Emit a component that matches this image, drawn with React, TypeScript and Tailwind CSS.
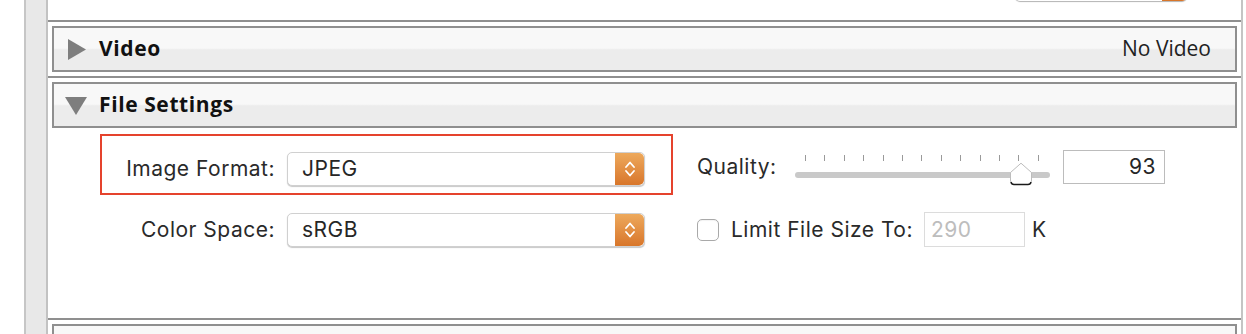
import React from "react";

const font = { fontFamily: "Inter, 'Noto Sans', sans-serif" };
const hfont = { fontFamily: "'Open Sans', sans-serif" };

function Stepper() {
  return (
    <div className="w-[29px] h-full rounded-r-[5px] bg-gradient-to-b from-[#eda95c] to-[#d8762a] flex items-center justify-center">
      <svg width="12" height="20" viewBox="0 0 12 20" fill="none">
        <path d="M2 8 L6 3.5 L10 8" stroke="white" strokeWidth="1.8" strokeLinecap="round" strokeLinejoin="round" />
        <path d="M2 12 L6 16.5 L10 12" stroke="white" strokeWidth="1.8" strokeLinecap="round" strokeLinejoin="round" />
      </svg>
    </div>
  );
}

function Popup({ value }: { value: string }) {
  return (
    <div className="w-[358px] h-[34px] flex rounded-[5px] bg-white border border-[#d0d0d0] shadow-[0_1px_1px_rgba(0,0,0,0.22)] overflow-hidden">
      <div className="flex-1 flex items-center pl-[14px] text-[21px] tracking-[0.5px] text-[#262626]">{value}</div>
      <Stepper />
    </div>
  );
}

function Header({ open, title, right }: { open: boolean; title: string; right?: string }) {
  return (
    <div className="shrink-0 mx-[4px] h-[46px] border-2 border-[#8f8f8f] bg-[linear-gradient(to_bottom,#f8f8f8_0%,#f8f8f8_48%,#ececec_52%,#ececec_100%)] flex items-center pl-[14px] pr-[24px]">
      {open ? (
        <svg width="22" height="18" viewBox="0 0 22 18" className="-ml-[3px] mr-[12px] mt-[2px]">
          <path d="M0 0 L22 0 L11 18 Z" fill="#7e7e7e" />
        </svg>
      ) : (
        <svg width="18" height="21" viewBox="0 0 18 21" className="mr-[13px]">
          <path d="M0 0 L18 10.5 L0 21 Z" fill="#7e7e7e" />
        </svg>
      )}
      <span className="text-[21px] font-bold tracking-[0.6px] text-[#111]" style={hfont}>{title}</span>
      <span className="ml-auto text-[21px] text-[#222]" style={hfont}>{right}</span>
    </div>
  );
}

export default function App() {
  const ticks = Array.from({ length: 13 }, (_, i) => i);
  const label = "text-[21px] tracking-[0.5px] text-[#2a2a2a]";
  return (
    <div className="w-[1246px] h-[334px] overflow-hidden bg-white flex items-start" style={font}>
      <div className="w-[24px] h-[334px] shrink-0 bg-white" />
      <div className="w-[24px] h-[334px] shrink-0 bg-[#e8e8e8] border-l-2 border-r-2 border-l-[#c6c6c6] border-r-[#c2c2c2]" />
      <div className="w-[1193px] shrink-0 flex flex-col">
        {/* top remnant */}
        <div className="h-[20px] shrink-0 relative">
          <div className="absolute left-[967px] top-[-10px] w-[172px] h-[11px] rounded-b-[5px] bg-white shadow-[0_1px_1px_rgba(0,0,0,0.3)] flex justify-end overflow-hidden">
            <div className="w-[25px] h-full bg-[#d8762a]" />
          </div>
        </div>
        {/* Video section */}
        <div className="shrink-0 border-t-2 border-[#8f8f8f] pt-[4px] pb-[4px]">
          <Header open={false} title="Video" right="No Video" />
        </div>
        {/* File settings */}
        <div className="shrink-0 border-t-2 border-[#8f8f8f] pt-[4px]">
          <Header open title="File Settings" />
          <div className="h-[190px] flex">
            <div className="flex flex-col">
              <div className="ml-[52px] mt-[6px] w-[573px] h-[61px] border-2 border-[#e5432d] flex items-start pt-[16px]">
                <div className={`w-[173px] text-right leading-[34px] ${label}`}>Image Format:</div>
                <div className="ml-[12px]"><Popup value="JPEG" /></div>
              </div>
              <div className="mt-[18px] flex items-start">
                <div className={`w-[227px] text-right leading-[34px] ${label}`}>Color Space:</div>
                <div className="ml-[12px]"><Popup value="sRGB" /></div>
              </div>
            </div>
            <div className="ml-[24px] flex flex-col">
              <div className="mt-[22px] h-[34px] flex items-center">
                <div className={`w-[98px] ${label}`}>Quality:</div>
                <div className="relative w-[255px] h-[34px]">
                  <div className="absolute left-0 right-0 top-[22px] h-[6px] rounded-full bg-[#c9c9c9]" />
                  {ticks.map((i) => (
                    <div key={i} className="absolute top-[5px] w-[1px] h-[6px] bg-[#9a9a9a]" style={{ left: 10 + i * 19.4 }} />
                  ))}
                  <svg width="24" height="24" viewBox="0 0 24 24" className="absolute left-[214px] top-[12px]">
                    <path d="M1.5 10.5 L12 1.2 L22.5 10.5 L22.5 19.5 Q22.5 22.5 19.5 22.5 L4.5 22.5 Q1.5 22.5 1.5 19.5 Z" fill="white" stroke="#bdbdbd" strokeWidth="1" />
                    <path d="M2 20 Q2.5 22.5 5 22.5 L19 22.5 Q21.5 22.5 22 20" fill="none" stroke="#1a1a1a" strokeWidth="1.4" />
                  </svg>
                </div>
                <div className="ml-[13px] w-[102px] h-[34px] border border-[#bcbcbc] bg-white flex items-center justify-end pr-[8px] text-[21px] tracking-[0.5px] text-[#262626]">93</div>
              </div>
              <div className="mt-[28px] h-[35px] flex items-center">
                <div className="w-[22px] h-[22px] rounded-[5px] border border-[#a9a9a9] bg-white shadow-[inset_0_1px_1px_rgba(0,0,0,0.05)]" />
                <div className={`ml-[12px] w-[181px] whitespace-nowrap ${label}`}>Limit File Size To:</div>
                <div className="ml-[12px] w-[101px] h-[35px] border border-[#dcdcdc] bg-white flex items-center pl-[6px] text-[21px] tracking-[0.5px] text-[#bdbdbd]">290</div>
                <div className={`ml-[7px] ${label}`}>K</div>
              </div>
            </div>
          </div>
        </div>
        {/* next section */}
        <div className="shrink-0 border-t-2 border-[#8f8f8f] pt-[4px]">
          <div className="mx-[4px] h-[46px] border-2 border-[#8f8f8f] bg-[#f8f8f8]" />
        </div>
      </div>
      <div className="w-[2px] h-[334px] shrink-0 bg-[#c4c4c4]" />
      <div className="flex-1 h-[334px] bg-white" />
    </div>
  );
}
